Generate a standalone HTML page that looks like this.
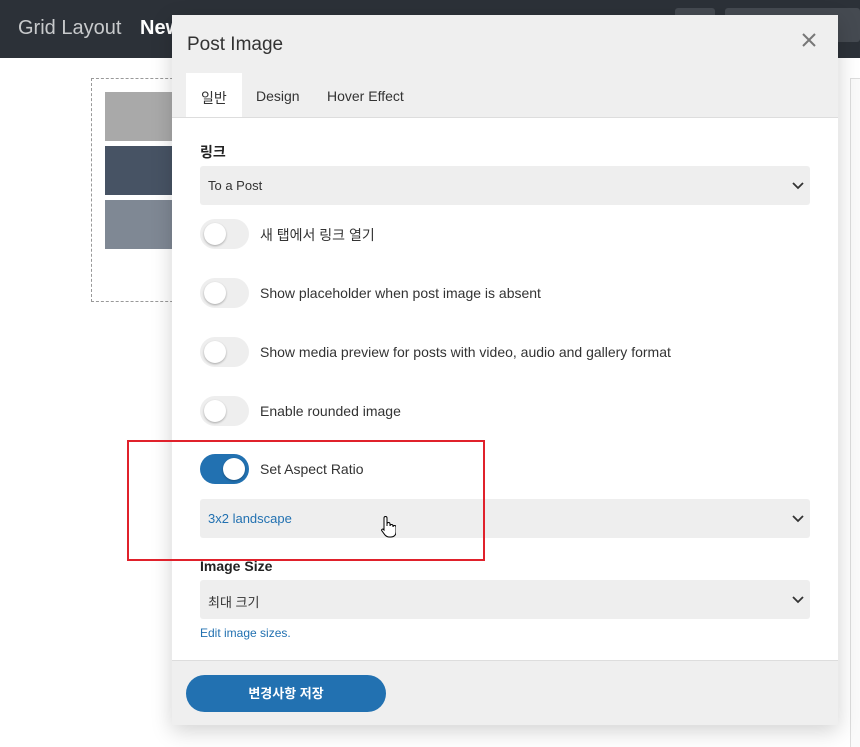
<!DOCTYPE html>
<html><head><meta charset="utf-8"><style>
body{margin:0;width:860px;height:746px;position:relative;overflow:hidden;background:#fff;font-family:"Liberation Sans","Noto Sans CJK KR",sans-serif;}
.top{position:absolute;left:0;top:0;width:860px;height:58px;background:#2c3138;}
.top .t{position:absolute;left:18px;top:17px;font-size:20px;color:#c8cacc;}
.top .b{position:absolute;left:140px;top:17px;font-size:20px;color:#fff;font-weight:bold;}
.tb1{position:absolute;left:675px;top:8px;width:40px;height:34px;background:#454a51;border-radius:3px}
.tb2{position:absolute;left:725px;top:8px;width:135px;height:34px;background:#454a51;border-radius:3px}
.dash{position:absolute;left:91px;top:78px;width:90px;height:222px;border:1px dashed #999;}
.sq{position:absolute;left:105px;width:80px;height:49px}
.rp{position:absolute;left:850px;top:78px;width:10px;height:668px;border-left:1px solid #ddd;border-top:1px solid #ddd;background:#fafafa}
.modal{position:absolute;left:172px;top:15px;width:666px;height:710px;background:#efefef;box-shadow:0 6px 20px rgba(0,0,0,.18);}
.title{position:absolute;left:15px;top:19px;font-size:19px;color:#333}
.x{position:absolute;right:22px;top:18px}
.tab{position:absolute;top:73px;font-size:14px;color:#333}
.body{position:absolute;left:0;top:102px;width:666px;height:542px;background:#fff;border-top:1px solid #ddd;border-bottom:1px solid #ddd}
.lbl{position:absolute;left:28px;font-size:14px;font-weight:bold;color:#222}
.sel{position:absolute;left:28px;width:610px;height:39px;background:#eee;border-radius:3px;font-size:13px;color:#333}
.sel span{position:absolute;left:8px;top:12px}
.sel svg{position:absolute;right:6px;top:16px}
.tg{position:absolute;left:28px;width:49px;height:30px;border-radius:15px;background:#eee}
.tg::after{content:"";position:absolute;left:4px;top:4px;width:22px;height:22px;border-radius:50%;background:#fff;box-shadow:0 1px 2px rgba(0,0,0,.3)}
.tg.on{background:#2271b1}.tg.on::after{left:23px}
.tl{position:absolute;left:88px;font-size:14px;color:#333}
.btn{position:absolute;left:14px;top:660px;width:200px;height:37px;border-radius:19px;background:#2271b1;color:#fff;font-size:13px;font-weight:bold;text-align:center;line-height:37px}
.red{position:absolute;left:127px;top:440px;width:354px;height:117px;border:2px solid #e0212b}
</style></head><body>
<div class="top"><div class="t">Grid Layout</div><div class="b">New</div><div class="tb1"></div><div class="tb2"></div></div>
<div class="dash"></div>
<div class="sq" style="top:92px;background:#a9a9a9"></div>
<div class="sq" style="top:146px;background:#475364"></div>
<div class="sq" style="top:200px;background:#7f8894"></div>
<div class="rp"></div>
<div class="modal">
<div class="title">Post Image</div><div class="x"><svg width="14" height="14"><path d="M1 1l12 12M13 1L1 13" stroke="#777" stroke-width="2"/></svg></div>
<div style="position:absolute;left:14px;top:58px;width:56px;height:46px;background:#fff"></div>
<div class="tab" style="left:29px">일반</div><div class="tab" style="left:84px">Design</div><div class="tab" style="left:155px">Hover Effect</div>
<div class="body">
<div class="lbl" style="top:24px">링크</div>
<div class="sel" style="top:48px"><span>To a Post</span><svg width="12" height="8"><path d="M1 1l5 5 5-5" stroke="#333" stroke-width="1.8" fill="none"/></svg></div>
<div class="tg" style="top:101px"></div><div class="tl" style="top:107px">새 탭에서 링크 열기</div>
<div class="tg" style="top:160px"></div><div class="tl" style="top:167px">Show placeholder when post image is absent</div>
<div class="tg" style="top:219px"></div><div class="tl" style="top:226px">Show media preview for posts with video, audio and gallery format</div>
<div class="tg" style="top:278px"></div><div class="tl" style="top:285px">Enable rounded image</div>
<div class="tg on" style="top:336px"></div><div class="tl" style="top:343px">Set Aspect Ratio</div>
<div class="sel" style="top:381px"><span style="color:#2271b1">3x2 landscape</span><svg width="12" height="8"><path d="M1 1l5 5 5-5" stroke="#333" stroke-width="1.8" fill="none"/></svg></div>
<div class="lbl" style="top:440px">Image Size</div>
<div class="sel" style="top:462px"><span>최대 크기</span><svg width="12" height="8"><path d="M1 1l5 5 5-5" stroke="#333" stroke-width="1.8" fill="none"/></svg></div>
<div style="position:absolute;left:28px;top:508px;font-size:12px;color:#2271b1">Edit image sizes.</div>
</div>
<div class="btn">변경사항 저장</div>
</div>
<div class="red"></div>
<svg style="position:absolute;left:378px;top:515px" width="18" height="24"><path d="M6 14V3a1.5 1.5 0 013 0v8V9a1.5 1.5 0 013 0v2a1.5 1.5 0 013 0v1a1.5 1.5 0 013 0v5c0 3-2 5-5 5h-2c-2 0-3-1-4-2l-3-4c-1-1 0-2 1-2l1 1z" fill="#fff" stroke="#000" stroke-width="1"/></svg>
</body></html>
